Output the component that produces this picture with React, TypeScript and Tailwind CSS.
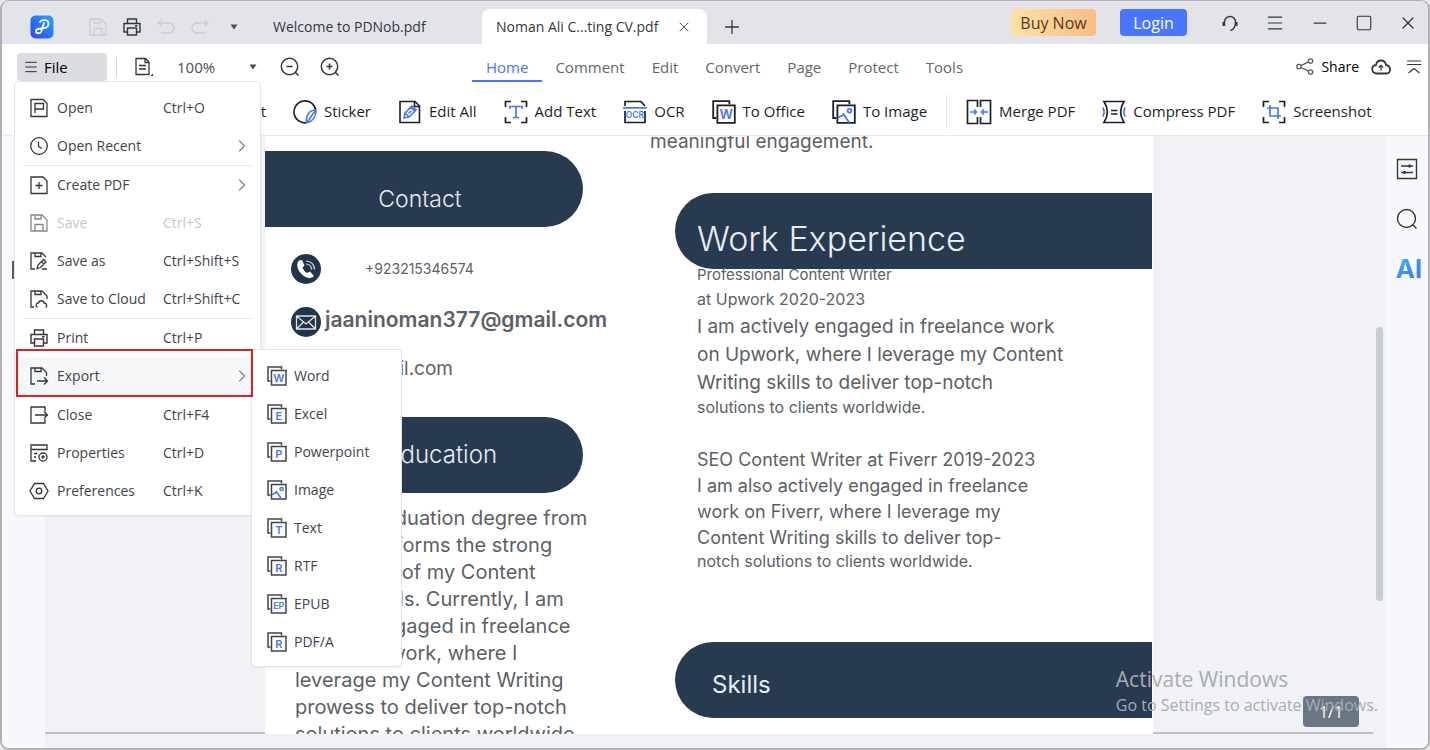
import * as React from "react";
import { ChevronRight, Menu, Minus, Plus, Square, X } from "lucide-react";

interface IconProps {
  className?: string;
  children?: React.ReactNode;
  box?: number;
  width?: number;
}

const Icon: React.FC<IconProps> = ({ className = "size-5", children, box = 20, width = 1.3 }) => (
  <svg
    viewBox={`0 0 ${box} ${box}`}
    className={`shrink-0 ${className}`}
    fill="none"
    stroke="currentColor"
    strokeWidth={width}
    aria-hidden="true"
  >
    {children}
  </svg>
);

const BLUE = "#4a76f5";

const Glyph: React.FC<{ x: number; y: number; size: number; children: string }> = ({ x, y, size, children }) => (
  <text
    x={x}
    y={y}
    fontSize={size}
    textAnchor="middle"
    fill={BLUE}
    stroke="none"
    className="font-['Inter',sans-serif] font-semibold"
  >
    {children}
  </text>
);

const Landscape = () => (
  <g stroke={BLUE}>
    <circle cx="14.6" cy="9" r="1.6" />
    <path d="M5 14.5l5-2.2M9 11l5.500 8" />
  </g>
);

// two stacked sheets with a format mark on the front one
const StackIcon: React.FC<{ mark: string; className?: string }> = ({ mark, className }) => (
  <Icon className={className} width={1.5}>
    <path d="M3.5 15H1V1h13.5v2.5" />
    <path d="M4.5 4.5h14.5v14.5H4.5z" />
    {mark === "image" ? (
      <Landscape />
    ) : (
      <Glyph x={11.8} y={mark.length > 1 ? 15 : 15.8} size={mark.length > 1 ? 9 : 11}>
        {mark}
      </Glyph>
    )}
  </Icon>
);

const Floppy = () => (
  <>
    <path d="M2 2h11l5 5v11H2z" />
    <path d="M6 2v4h6V2M6 18v-6.5h8V18" />
  </>
);

const OpenIcon = () => (
  <Icon>
    <path d="M2 1.500h12l4 4v13H2z" />
    <path d="M6 15V5.500h8.500V11H6" />
  </Icon>
);

const RecentIcon = () => (
  <Icon>
    <circle cx="10" cy="10" r="8.300" />
    <path d="M9.500 5.500v5l3.500 2" />
  </Icon>
);

const CreateIcon = () => (
  <Icon>
    <path d="M2 2h12l4 4v12.500H2z" />
    <path d="M10 7v7M6.500 10.500h7" />
  </Icon>
);

const SaveIcon = () => (
  <Icon>
    <Floppy />
  </Icon>
);

const SaveAsIcon = () => (
  <Icon>
    <path d="M6 18H2V2h11l4 4" />
    <path d="M6 2v3.500h6V2M8 17.500l1-3.500 5.500-5.500 2.500 2.500-5.500 5.500zM13 18h5M12.500 10.500L15 13" />
  </Icon>
);

const SaveCloudIcon = () => (
  <Icon>
    <path d="M5 18H2V2h11l5 5v3" />
    <path d="M6 2v3.500h6V2M8.500 18.500c-2.500-1.500-1.500-4.500 1-4.500.5-3 5-3 5.500 0 3 0 3.500 3.500 1.500 4.500" />
  </Icon>
);

const PrintIcon: React.FC<{ className?: string }> = ({ className }) => (
  <Icon className={className} width={1.4}>
    <path d="M5.500 6V2h9v4M5 15H2V6.500h16V15h-3" />
    <path d="M5.500 11h9v7h-9zM13 8.700h2.500" />
  </Icon>
);

const ExportIcon = () => (
  <Icon>
    <path d="M6 18H2V2h11l4.500 4.500V10" />
    <path d="M6 2v3.500h6V2M8 15h10.500M15 11.500l3.500 3.500-3.500 3.500" />
  </Icon>
);

const CloseFileIcon = () => (
  <Icon>
    <path d="M16 6V2H2v16h14v-4" />
    <path d="M6 10h12.500M15 6.500l3.500 3.500-3.500 3.500" />
  </Icon>
);

const PropertiesIcon = () => (
  <Icon>
    <path d="M7 18H2V2h16v5M2 6.500h16M5 10.500h3M5 14h2" />
    <circle cx="14" cy="14" r="4" />
    <circle cx="14" cy="14" r="1" />
  </Icon>
);

const PreferencesIcon = () => (
  <Icon>
    <path d="M5.500 2.500h9L19 10l-4.500 7.500h-9L1 10z" />
    <circle cx="10" cy="10" r="2.800" />
  </Icon>
);

const StickerIcon = () => (
  <Icon box={24} className="size-6" width={1.6}>
    <path d="M13.500 22.800A11 11 0 1 1 22.800 10" />
    <path stroke={BLUE} d="M13.500 22.800c-.8-7 2-12.500 9.300-12.800.8 6-3.300 12-9.300 12.800zM14 22.500L22.600 10.300" />
  </Icon>
);

const EditAllIcon = () => (
  <Icon box={24} className="size-6" width={1.6}>
    <path d="M2 1.500h15L21.500 6v16.500H2z" />
    <path d="M16.500 1.500V6.500h5" />
    <path stroke={BLUE} d="M6 18l1-5 5.800-5.800 4 4-5.800 5.800zM12.800 7.200l1.200-1.200 4 4-1.200 1.200M7 13l4 4M10.500 13.500l2.800-2.800" />
  </Icon>
);

const AddTextIcon = () => (
  <Icon box={24} className="size-6" width={1.7}>
    <path d="M1.500 7V1.500H7M17 1.500h5.500V7M22.500 17v5.500H17M7 22.500H1.500V17" />
    <path stroke={BLUE} d="M6 9V6.500h12V9M12 6.500v11M9 17.500h6" />
  </Icon>
);

const OcrIcon = () => (
  <Icon box={24} className="size-6" width={1.7}>
    <path d="M2 6V1.500h16L22 6M2 11v11.500h20V11" />
    <path stroke={BLUE} d="M0 7.800h24" />
    <Glyph x={12} y={18.300} size={8.500}>
      OCR
    </Glyph>
  </Icon>
);

const MergeIcon = () => (
  <Icon box={26} className="size-[26px]" width={1.7}>
    <path d="M11.500 8V1.500H1.500v23h10V18M14.500 8V1.500h10v23h-10V18" />
    <path stroke={BLUE} d="M4 13h6M8 10.500l2.500 2.500L8 15.500M22 13h-6M18 10.500L15.500 13l2.500 2.500" />
  </Icon>
);

const CompressIcon = () => (
  <Icon box={24} className="size-6" width={1.7}>
    <path d="M2 1.500h20c-4.500 7-4.500 14 0 21H2c4.500-7 4.500-14 0-21z" />
    <path d="M9 10.500h6.500M9 14h6.500" />
    <path stroke={BLUE} d="M.8 7.500c1.800 3 1.800 6 0 9M23.200 7.500c-1.800 3-1.800 6 0 9" />
  </Icon>
);

const ScreenshotIcon = () => (
  <Icon box={24} className="size-6" width={1.7}>
    <path d="M1.500 7V1.500H7M17 1.500h5.500V7M22.500 17v5.500H17M7 22.500H1.500V17" />
    <path stroke={BLUE} d="M8 5v11h11M5 8h11v11" />
  </Icon>
);

interface MenuEntry {
  label: string;
  keys?: string;
  icon: React.ReactNode;
  sub?: boolean;
  disabled?: boolean;
  divider?: boolean;
}

const fileMenu: MenuEntry[] = [
  { label: "Open", keys: "Ctrl+O", icon: <OpenIcon /> },
  { label: "Open Recent", icon: <RecentIcon />, sub: true, divider: true },
  { label: "Create PDF", icon: <CreateIcon />, sub: true },
  { label: "Save", keys: "Ctrl+S", icon: <SaveIcon />, disabled: true },
  { label: "Save as", keys: "Ctrl+Shift+S", icon: <SaveAsIcon /> },
  { label: "Save to Cloud", keys: "Ctrl+Shift+C", icon: <SaveCloudIcon />, divider: true },
  { label: "Print", keys: "Ctrl+P", icon: <PrintIcon /> },
  { label: "Export", icon: <ExportIcon />, sub: true, divider: true },
  { label: "Close", keys: "Ctrl+F4", icon: <CloseFileIcon /> },
  { label: "Properties", keys: "Ctrl+D", icon: <PropertiesIcon /> },
  { label: "Preferences", keys: "Ctrl+K", icon: <PreferencesIcon /> },
];

const exportMenu = [
  { label: "Word", mark: "W" },
  { label: "Excel", mark: "E" },
  { label: "Powerpoint", mark: "P" },
  { label: "Image", mark: "image" },
  { label: "Text", mark: "T" },
  { label: "RTF", mark: "R" },
  { label: "EPUB", mark: "EP" },
  { label: "PDF/A", mark: "R" },
];

const tools = [
  { label: "Sticker", icon: <StickerIcon /> },
  { label: "Edit All", icon: <EditAllIcon /> },
  { label: "Add Text", icon: <AddTextIcon /> },
  { label: "OCR", icon: <OcrIcon /> },
  { label: "To Office", icon: <StackIcon mark="W" className="size-6" /> },
  { label: "To Image", icon: <StackIcon mark="image" className="size-6" /> },
];

const pageTools = [
  { label: "Merge PDF", icon: <MergeIcon /> },
  { label: "Compress PDF", icon: <CompressIcon /> },
  { label: "Screenshot", icon: <ScreenshotIcon /> },
];

const ribbonTabs = ["Home", "Comment", "Edit", "Convert", "Page", "Protect", "Tools"];

const Caret = () => (
  <svg viewBox="0 0 8 6" className="h-[6px] w-[8px] shrink-0" fill="#4b4f58" aria-hidden="true">
    <path d="M.5.500h7L4 5.500z" />
  </svg>
);

const ExportSubmenu = () => (
  <ul className="absolute left-[236px] -top-2 z-10 w-[151px] rounded border border-[#e3e4e8] bg-white pt-[7px] pb-[5px] shadow-xs">
    {exportMenu.map((item) => (
      <li key={item.label}>
        <button className="flex h-[38px] w-full items-center gap-[7px] pl-[15px] text-left">
          <StackIcon mark={item.mark} />
          {item.label}
        </button>
      </li>
    ))}
  </ul>
);

const FileMenu = () => (
  <div className="absolute -left-[3px] top-full z-20 w-[247px] rounded border border-[#e3e4e8] bg-white pt-[7px] pb-[5px] text-sm text-[#41444b] shadow-xs">
    <ul>
      {fileMenu.map((item) => (
        <li key={item.label} className="relative">
          <button
            disabled={item.disabled}
            className={`flex h-[38px] w-full items-center pl-[14px] pr-2 text-left disabled:text-[#c6c7ca] ${
              item.label === "Export" ? "bg-[#f5f7f9]" : ""
            }`}
          >
            <span className={item.disabled ? "text-[#85878c]" : "text-[#33363d]"}>{item.icon}</span>
            <span className="ml-2 w-[106px] shrink-0">{item.label}</span>
            <span className="whitespace-nowrap">{item.keys}</span>
            {item.sub && <ChevronRight className="ml-auto size-5 text-[#7b7e85]" strokeWidth={1.3} />}
          </button>
          {item.divider && <div className="mx-2 h-px bg-[#e6e7ea]" />}
          {item.label === "Export" && (
            <>
              <div className="pointer-events-none absolute left-[1px] -top-2 z-20 h-[48px] w-[237px] border-2 border-[#e0201f]" />
              <ExportSubmenu />
            </>
          )}
        </li>
      ))}
    </ul>
  </div>
);

const TitleBar = () => (
  <header className="flex h-[43px] shrink-0 bg-[#e3e4e9] text-[#33363d]">
    <div className="flex items-center pt-2 pl-7">
      <svg viewBox="0 0 24 24" className="size-6" aria-label="PDNob" role="img">
        <defs>
          <linearGradient id="logo" x1="1" y1="0" x2="0" y2="1">
            <stop offset="0" stopColor="#22a5ff" />
            <stop offset="1" stopColor="#3344f0" />
          </linearGradient>
        </defs>
        <rect width="23" height="23" x=".5" y=".5" rx="5" fill="url(#logo)" />
        <path
          d="M10 7c1.500-2.500 8.500-3 8.500 1.800 0 3.500-3 4.700-7 4.700-3.500 0-5.500.5-5.500 2.700 0 2.600 4.300 2.800 5.300.3L14 8"
          fill="none"
          stroke="#fff"
          strokeWidth="1.800"
          strokeLinecap="round"
        />
      </svg>
      <div className="ml-[34px] flex items-center gap-[14px]">
        <button aria-label="Save" className="text-[#cbcdd2]">
          <SaveIcon />
        </button>
        <button aria-label="Print">
          <PrintIcon />
        </button>
        <button aria-label="Undo" className="text-[#cbcdd2]">
          <Icon width={1.5}>
            <path d="M5.500 3L2.500 6l3 3M2.500 6H13a5 5 0 0 1 0 10H5" />
          </Icon>
        </button>
        <button aria-label="Redo" className="text-[#cbcdd2]">
          <Icon width={1.5}>
            <path d="M14.500 3l3 3-3 3M17.500 6H7a5 5 0 0 0 0 10h8" />
          </Icon>
        </button>
        <button aria-label="Customize" className="ml-[6px]">
          <Caret />
        </button>
      </div>
    </div>
    <nav className="ml-[35px] flex pt-2 text-sm">
      <button className="w-[209px] text-left">Welcome to PDNob.pdf</button>
      <div className="flex w-[225px] items-center rounded-t-lg bg-white pl-[14px]">
        <button className="w-[180px] text-left">Noman Ali C...ting CV.pdf</button>
        <button aria-label="Close tab">
          <X className="size-4" strokeWidth={1.3} />
        </button>
      </div>
      <button aria-label="New tab" className="ml-[14px]">
        <Plus className="size-[22px]" strokeWidth={1.4} />
      </button>
    </nav>
    <div className="ml-auto flex items-center pr-[10px]">
      <button className="h-[27px] w-[85px] rounded bg-linear-to-r from-[#fde2a4] to-[#fbbc83] text-base text-[#553a1c]">
        Buy Now
      </button>
      <button className="ml-6 h-[27px] w-[67px] rounded bg-[#4876ff] text-base text-white">Login</button>
      <div className="ml-[33px] flex items-center gap-[25px]">
        <button aria-label="Support">
          <Icon width={1.4}>
            <path d="M4.500 13V9a5.500 5.500 0 0 1 11 0c0 4-.5 7-5 8.500" />
            <path strokeWidth="2" d="M3.500 9v4M16.500 9v4" />
          </Icon>
        </button>
        <button aria-label="Main menu">
          <Menu className="size-5" strokeWidth={1.4} />
        </button>
        <button aria-label="Minimize">
          <Minus className="size-5" strokeWidth={1.5} />
        </button>
        <button aria-label="Maximize">
          <Square className="size-[18px]" strokeWidth={1.5} />
        </button>
        <button aria-label="Close">
          <X className="size-5" strokeWidth={1.5} />
        </button>
      </div>
    </div>
  </header>
);

const ZoomIcon: React.FC<{ plus?: boolean }> = ({ plus }) => (
  <Icon width={1.5}>
    <circle cx="9.500" cy="9.500" r="8.200" />
    <path d="M15.500 15.500l3 3M6.500 9.500h6" />
    {plus && <path d="M9.500 6.500v6" />}
  </Icon>
);

const Ribbon = () => (
  <div className="flex h-[46px] shrink-0 items-center bg-white text-[15px] text-[#33363d]">
    <div className="relative ml-[15px]">
      <button className="flex h-7 w-[90px] items-center gap-[5px] rounded bg-[#dcdde0] pl-[6px] text-black">
        <Menu className="size-4" strokeWidth={1.2} />
        File
      </button>
      <FileMenu />
    </div>
    <div className="ml-[9px] h-5 w-px bg-[#d5d7db]" />
    <button aria-label="Page view" className="ml-[17px]">
      <Icon width={1.3}>
        <path d="M2 1.500h9.500L15 5v12.500H2zM11 1.500V5.500h4M5 8.500h7M5 12h7" />
        <path d="M19 16.500v2.500h-2.500z" fill="currentColor" stroke="none" />
      </Icon>
    </button>
    <div className="relative ml-[23px] flex items-center">
      <select aria-label="Zoom level" className="w-[82px] appearance-none text-[#4b4f58]" defaultValue="100%">
        <option>100%</option>
      </select>
      <span className="pointer-events-none absolute right-[2px]">
        <Caret />
      </span>
    </div>
    <button aria-label="Zoom out" className="ml-[21px]">
      <ZoomIcon />
    </button>
    <button aria-label="Zoom in" className="ml-5">
      <ZoomIcon plus />
    </button>
    <nav className="ml-[132px] flex -space-x-px text-[#63666d]">
      {ribbonTabs.map((tab) => (
        <button
          key={tab}
          className={`h-[30px] border-b-2 px-[14px] pt-[2px] ${
            tab === "Home" ? "border-[#4876ff] text-[#4876ff]" : "border-transparent"
          }`}
        >
          {tab}
        </button>
      ))}
    </nav>
    <div className="ml-auto flex items-center pr-1">
      <button className="flex items-center gap-[6px] text-sm text-black">
        <Icon className="size-5 text-[#5b5e66]" width={1.3}>
          <circle cx="4" cy="9.500" r="2.200" />
          <circle cx="15.500" cy="4" r="2.200" />
          <circle cx="15.500" cy="15" r="2.200" />
          <path d="M6 8.700l7.500-3.800M6 10.500l7.500 3.700" />
        </Icon>
        Share
      </button>
      <button aria-label="Upload to cloud" className="ml-[12px]">
        <Icon className="size-5" width={1.8}>
          <path d="M5.500 16.500C-.5 16 .2 8.500 5 8c1-6 9-6 10 0 5 .5 5.500 8 .5 8.500z" />
          <path strokeWidth="1.300" d="M10 13.500V8.500M7.800 10.500L10 8.300l2.200 2.200" />
        </Icon>
      </button>
      <button aria-label="Collapse toolbar" className="ml-[13px]">
        <Icon width={1.2}>
          <path d="M3 4h14M3 7.500h14M4.500 16l5.500-4.500 5.500 4.500" />
        </Icon>
      </button>
    </div>
  </div>
);

const ToolButton: React.FC<{ label: string; icon: React.ReactNode }> = ({ label, icon }) => (
  <button className="flex items-center gap-[7px] whitespace-nowrap">
    {icon}
    {label}
  </button>
);

const Toolbar = () => (
  <div className="flex h-[46px] shrink-0 items-center gap-[27px] border-b border-[#e8e9ec] bg-white pb-[2px] text-[15px] text-[#1d1f24]">
    <button className="w-[264px] text-right">Select</button>
    {tools.map((tool) => (
      <ToolButton key={tool.label} {...tool} />
    ))}
    <div className="-mx-2 h-9 w-px bg-[#e8e9ec]" />
    {pageTools.map((tool) => (
      <ToolButton key={tool.label} {...tool} />
    ))}
  </div>
);

const Contact = () => (
  <section className="w-[350px] shrink-0 pt-[15px]">
    <h2 className="h-[76px] w-[318px] rounded-r-full bg-[#273a50] pt-[34px] pr-2 text-center text-[23px] leading-7 font-light text-[#e8edf3]">
      Contact
    </h2>
    <div className="mt-[27px] flex h-[30px] items-center pl-[26px]">
      <Icon box={30} className="size-[30px]">
        <circle cx="15" cy="15" r="15" fill="#22344a" stroke="none" />
        <path
          d="M8 6.500c-3 3-2 9 2.500 13.500s10 5 12.500 2l-4-4.500-3 1.500c-2-1-4-3.500-4.500-5.500l2-2L11 6z"
          fill="#fff"
          stroke="none"
        />
        <path stroke="#dfe4ea" strokeWidth="1.200" d="M15 7c5 0 8.500 3.500 8.500 8.500M15 10c3 0 5.500 2 5.500 5.500" />
      </Icon>
      <span className="ml-11 text-sm">+923215346574</span>
    </div>
    <div className="mt-[23px] flex h-[30px] items-center pl-[26px]">
      <Icon box={30} className="size-[30px]">
        <circle cx="15" cy="15" r="15" fill="#22344a" stroke="none" />
        <path stroke="#dfe4ea" d="M5.500 9h19v13h-19zM5.500 9l9.500 8 9.500-8M5.500 22l7-7M24.500 22l-7-7" />
      </Icon>
      <span className="ml-1 pb-1 text-[21px] leading-7 font-semibold">jaaninoman377@gmail.com</span>
    </div>
    <p className="mt-5 w-[188px] text-right text-[19px] leading-6">jaani@gmail.com</p>
    <h2 className="mt-9 h-[76px] w-[318px] rounded-r-full bg-[#273a50] pt-[24px] pr-[86px] text-right text-2xl leading-7 font-light text-[#e8edf3]">
      Education
    </h2>
    <p className="mt-3 pl-[30px] text-xl leading-[27px] whitespace-nowrap">
      I had a graduation degree from
      <br />
      University forms the strong
      <br />
      foundation of my Content
      <br />
      Writing skills. Currently, I am
      <br />
      already engaged in freelance
      <br />
      freelance work, where I
      <br />
      leverage my Content Writing
      <br />
      prowess to deliver top-notch
      <br />
      solutions to clients worldwide.
    </p>
  </section>
);

const Experience = () => (
  <section className="flex-1 pl-[35px] whitespace-nowrap">
    <p className="-mt-[6px] text-[19px] leading-6">meaningful engagement.</p>
    <div className="pl-[25px]">
      <h2 className="mt-[39px] h-[76px] rounded-l-full bg-[#273a50] pt-[26px] pl-[22px] text-[34px] leading-10 font-light text-[#e8edf3]">
        Work Experience
      </h2>
      <div className="pl-[22px]">
        <p className="-mt-1 text-[15px] leading-5">Professional Content Writer</p>
        <p className="text-base leading-7">at Upwork 2020-2023</p>
        <p className="text-[19px] leading-7">
          I am actively engaged in freelance work
          <br />
          on Upwork, where I leverage my Content
          <br />
          Writing skills to deliver top-notch
        </p>
        <p className="text-base leading-5">solutions to clients worldwide.</p>
        <p className="mt-[30px] text-lg leading-[26px]">
          SEO Content Writer at Fiverr 2019-2023
          <br />
          I am also actively engaged in freelance
          <br />
          work on Fiverr, where I leverage my
          <br />
          Content Writing skills to deliver top-
        </p>
        <p className="text-base leading-5">notch solutions to clients worldwide.</p>
      </div>
      <h2 className="mt-[71px] h-[76px] rounded-l-full bg-[#273a50] pt-[29px] pl-[37px] text-2xl leading-7 text-[#e8edf3]">
        Skills
      </h2>
    </div>
  </section>
);

const Viewer = () => (
  <main className="flex min-w-0 flex-1 flex-col bg-[#f0f2f5]">
    <div className="flex min-h-0 flex-1 overflow-hidden">
      <div className="flex-1 border-b-2 border-[#bfc1c4]" />
      <article className="flex w-[888px] shrink-0 overflow-hidden bg-white pr-px font-['Inter',sans-serif] text-[#5c5f66]">
        <Contact />
        <Experience />
      </article>
      <div className="flex-1 border-b-2 border-[#bfc1c4]" />
      <div className="flex w-[13px] shrink-0 justify-center pt-[191px]">
        <div className="h-[274px] w-[7px] rounded-full bg-[#c9cdd3]" />
      </div>
    </div>
    <div className="h-[14px] shrink-0" />
  </main>
);

const SideRail = () => (
  <aside className="flex w-[42px] shrink-0 flex-col items-center gap-[26px] bg-[#f6f8fb] pt-[21px] text-[#33363d]">
    <button aria-label="Page settings">
      <Icon box={24} className="size-6" width={1.4}>
        <path d="M2.500 2.500h19v19h-19zM6 9h12M6 15.500h12" />
        <path strokeWidth="2" d="M14.500 7.500v3M9.500 14v3" />
      </Icon>
    </button>
    <button aria-label="Search">
      <Icon box={24} className="size-6" width={1.4}>
        <circle cx="11.500" cy="11.500" r="9" />
        <path d="M17.500 17.500l4 4" />
      </Icon>
    </button>
    <button className="bg-linear-to-br from-[#38d0e8] via-[#3f92f5] to-[#3572ee] bg-clip-text pl-1 font-['Inter',sans-serif] text-[26px] leading-6 font-bold text-transparent">
      AI
    </button>
  </aside>
);

export default function App() {
  return (
    <div className="bg-[#e9e9ea]">
      <div className="relative flex h-screen w-full flex-col overflow-hidden rounded-[9px] border-2 border-t-1 border-[#b0b1b4] font-['Open_Sans','Noto_Sans',sans-serif]">
        <TitleBar />
        <Ribbon />
        <Toolbar />
        <div className="flex min-h-0 flex-1">
          <aside className="flex w-[43px] shrink-0 bg-[#f6f8fb] pt-[125px] pl-[10px]">
            <button aria-label="Expand panel" className="h-[18px] w-3 border-l-2 border-[#5b5e66]" />
          </aside>
          <Viewer />
          <SideRail />
        </div>
        <div className="absolute right-[69px] bottom-[21px] flex h-[31px] w-[56px] items-center justify-center rounded bg-[#6b7684] text-base text-white">
          1/1
        </div>
        <div className="pointer-events-none absolute right-[50px] bottom-[31px] text-[#a9acb1]">
          <p className="text-[21px] leading-7">Activate Windows</p>
          <p className="text-base leading-6">Go to Settings to activate Windows.</p>
        </div>
      </div>
    </div>
  );
}
